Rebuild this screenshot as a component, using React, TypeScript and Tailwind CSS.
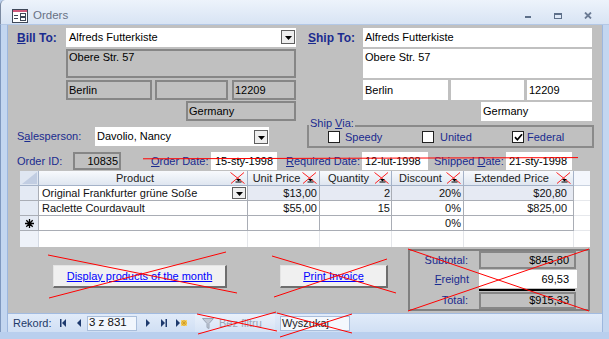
import React from "react";

const LBL = "text-[#1a2b8f]";

function U({ children }: { children: React.ReactNode }) {
  return <span className="underline underline-offset-[1px]">{children}</span>;
}

function DropBtn({ className = "" }: { className?: string }) {
  return (
    <div
      className={`absolute w-[14px] h-[14px] bg-[#eeeeee] border border-[#5e5e5e] flex items-end justify-center pb-[3px] ${className}`}
    >
      <svg width="7" height="4" viewBox="0 0 7 4">
        <path d="M0 0H7L3.5 4Z" fill="#000" />
      </svg>
    </div>
  );
}

function Check({ checked = false }: { checked?: boolean }) {
  return (
    <div className="w-[12px] h-[12px] bg-white border border-[#202020] flex items-center justify-center">
      {checked && (
        <svg width="9" height="9" viewBox="0 0 9 9">
          <path d="M1 4.2 L3.4 6.8 L8 1.2" stroke="#000" strokeWidth="1.7" fill="none" />
        </svg>
      )}
    </div>
  );
}

const gbox = "bg-[#c0c0c0] border-2 border-[#868686] flex items-center px-[1px]";
const wbox = "bg-white flex items-center pl-[2px]";

function TitleBar() {
  return (
    <div className="h-[25px] flex items-start pt-[6px] bg-linear-to-b from-[#edf3fb] to-[#d8e4f4] border-b border-[#b3c8e6] border-l border-l-[#7b8aa1] rounded-tl-[5px]">
      <div className="h-[19px] flex items-center ml-[11px]">
        <svg width="16" height="14" viewBox="0 0 16 14">
          <rect x="0.5" y="0.5" width="15" height="13" fill="#ffffff" stroke="#3e4858" />
          <rect x="1" y="1" width="14" height="2" fill="#cf5a7c" />
          <rect x="2" y="6" width="4" height="1" fill="#3e4858" />
          <rect x="2" y="9" width="4" height="1" fill="#3e4858" />
          <rect x="8.5" y="4.5" width="5" height="3" fill="none" stroke="#3e4858" />
          <rect x="8.5" y="8.5" width="5" height="3" fill="none" stroke="#3e4858" />
        </svg>
        <span className="ml-[5px] text-[11.5px] text-[#687184]">Orders</span>
      </div>
      <div className="ml-auto flex mr-[6px] h-[19px]">
        <div className="w-[30px] h-[19px] flex items-center justify-center">
          <div className="w-[6px] h-[2px] bg-[#5d6f89] mt-[3px]" />
        </div>
        <div className="w-[30px] h-[19px] flex items-center justify-center">
          <div className="w-[8px] h-[6px] border border-[#5d6f89] border-t-2" />
        </div>
        <div className="w-[30px] h-[19px] flex items-center justify-center">
          <svg width="8" height="7" viewBox="0 0 8 7">
            <path d="M1 0.5L7 6.5M7 0.5L1 6.5" stroke="#6b7b94" strokeWidth="1.8" />
          </svg>
        </div>
      </div>
    </div>
  );
}

function TopBand() {
  return (
    <div className="flex pt-[3px] h-[96px]">
      <div className={`w-[58px] pl-[9px] h-[19px] flex items-center text-[12px] font-bold ${LBL}`}>
        <span>
          <U>B</U>ill To:
        </span>
      </div>
      <div className="w-[230px] flex flex-col">
        <div className={`relative h-[19px] ${wbox} pl-[3px]`}>
          Alfreds Futterkiste
          <DropBtn className="right-[1px] top-[2px]" />
        </div>
        <div className={`mt-[2px] h-[29px] ${gbox} !items-start pt-[1px]`}>Obere Str. 57</div>
        <div className="mt-[2px] h-[20px] flex">
          <div className={`w-[86px] ${gbox}`}>Berlin</div>
          <div className={`ml-[3px] w-[73px] ${gbox}`} />
          <div className={`ml-[4px] w-[64px] ${gbox}`}>12209</div>
        </div>
        <div className={`mt-[1px] ml-[120px] w-[110px] h-[20px] ${gbox}`}>Germany</div>
      </div>
      <div className={`ml-[12px] w-[55px] h-[19px] flex items-center text-[12px] font-bold ${LBL}`}>
        <span>
          <U>S</U>hip To:
        </span>
      </div>
      <div className="w-[229px] flex flex-col">
        <div className={`h-[19px] ${wbox}`}>Alfreds Futterkiste</div>
        <div className={`mt-[2px] h-[29px] ${wbox} !items-start pt-[3px]`}>Obere Str. 57</div>
        <div className="mt-[2px] h-[20px] flex">
          <div className={`w-[85px] ${wbox}`}>Berlin</div>
          <div className={`ml-[3px] w-[73px] ${wbox}`} />
          <div className={`ml-[3px] w-[65px] ${wbox}`}>12209</div>
        </div>
        <div className={`mt-[2px] ml-[118px] w-[111px] h-[19px] ${wbox}`}>Germany</div>
      </div>
    </div>
  );
}

function Band2() {
  return (
    <div className="flex h-[29px] items-start">
      <div className={`w-[87px] pl-[9px] mt-[6px] h-[19px] flex items-center ${LBL}`}>
        <span>
          S<U>a</U>lesperson:
        </span>
      </div>
      <div className={`relative w-[174px] mt-[6px] h-[19px] ${wbox}`}>
        Davolio, Nancy
        <DropBtn className="right-[1px] top-[3px]" />
      </div>
      <div className="relative ml-[38px] mt-[4px] w-[287px] h-[23px] border-2 border-[#8a8a8a] flex items-start">
        <span className={`absolute left-0 -top-[10px] bg-[#c0c0c0] px-[1px] h-[12px] leading-[12px] ${LBL}`}>
          Ship <U>V</U>ia:
        </span>
        <div className="ml-[19px] mt-[4px] w-[94px] flex items-center">
          <Check />
          <span className={`ml-[5px] ${LBL}`}>Speedy</span>
        </div>
        <div className="mt-[4px] w-[90px] flex items-center">
          <Check />
          <span className={`ml-[6px] ${LBL}`}>United</span>
        </div>
        <div className="mt-[4px] flex items-center">
          <Check checked />
          <span className={`ml-[3px] ${LBL}`}>Federal</span>
        </div>
      </div>
    </div>
  );
}

function Band3() {
  return (
    <div className="flex h-[20px] items-start">
      <div className={`w-[65px] pl-[9px] mt-[2px] h-[18px] flex items-center ${LBL}`}>Order ID:</div>
      <div className={`w-[48px] mt-[2px] h-[18px] ${gbox} justify-end`}>10835</div>
      <div className={`w-[90px] pl-[30px] mt-[2px] h-[18px] flex items-center ${LBL}`}>
        <span>
          <U>O</U>rder Date:
        </span>
      </div>
      <div className={`w-[66px] mt-[2px] h-[18px] ${wbox} pl-[4px]`}>15-sty-1998</div>
      <div className={`w-[85px] pl-[9px] mt-[2px] h-[18px] flex items-center ${LBL}`}>
        <span>
          <U>R</U>equired Date:
        </span>
      </div>
      <div className={`w-[66px] mt-[2px] h-[18px] ${wbox} pl-[3px]`}>12-lut-1998</div>
      <div className={`w-[78px] pl-[6px] mt-[2px] h-[18px] flex items-center ${LBL}`}>
        <span>
          Shipped <U>D</U>ate:
        </span>
      </div>
      <div className={`w-[66px] mt-[2px] h-[18px] ${wbox} pl-[3px]`}>21-sty-1998</div>
    </div>
  );
}

function FilterX() {
  return (
    <svg className="absolute right-[2px] top-[1px]" width="15" height="12" viewBox="0 0 15 12">
      <path d="M0.5 0.5L14.5 11.5M14 0.5L1 11.5" stroke="#ff2020" strokeWidth="1" />
      <path d="M6 7H11L8.5 9.5Z" fill="#000" />
      <rect x="5.5" y="9.5" width="6" height="1" fill="#000" />
    </svg>
  );
}

const cols = [
  { w: "w-[209px]", name: "Product", pr: "pr-[16px]" },
  { w: "w-[72px]", name: "Unit Price", pr: "pr-[14px]" },
  { w: "w-[72px]", name: "Quantity", pr: "pr-[14px]" },
  { w: "w-[72px]", name: "Discount", pr: "pr-[14px]" },
  { w: "w-[110px]", name: "Extended Price", pr: "pr-[14px]" },
];

const grid = "border-r border-b border-[#a9adb5]";

function Datasheet() {
  const rows = [
    ["Original Frankfurter grüne Soße", "$13,00", "2", "20%", "$20,80"],
    ["Raclette Courdavault", "$55,00", "15", "0%", "$825,00"],
    ["", "", "", "0%", ""],
  ];
  const pads = ["pl-[3px]", "pr-[2px]", "pr-[1px]", "pr-[2px]", "pr-[6px]"];
  return (
    <div className="mt-[1px] ml-[12px] w-[570px] h-[76px] flex flex-col bg-white text-[#111]">
      <div className="flex h-[15px]">
        <div className="w-[19px] h-[15px] bg-[#dfe6f1] border-r border-b border-[#a4b2c8] relative">
          <svg className="absolute left-[2px] top-[1px]" width="15" height="12" viewBox="0 0 15 12">
            <path d="M15 0V12H0Z" fill="#c1cde2" />
          </svg>
        </div>
        {cols.map((c) => (
          <div
            key={c.name}
            className={`${c.w} relative h-[15px] bg-linear-to-b from-[#f8fafd] to-[#dfe6f0] border-r border-b border-[#a4b2c8] flex items-center justify-center ${c.pr} text-[#222]`}
          >
            {c.name}
            <FilterX />
          </div>
        ))}
        <div className="w-[16px] h-[15px] bg-[#f3f6fc] border-b border-[#c9d2e0]" />
      </div>
      {rows.map((r, i) => (
        <div key={i} className="flex h-[15px]">
          <div className={`w-[19px] h-[15px] bg-[#e4eaf4] ${grid} flex items-center justify-center`}>
            {i === 2 && (
              <svg width="9" height="9" viewBox="0 0 9 9">
                <path d="M4.5 0V9M0 4.5H9M1.3 1.3L7.7 7.7M7.7 1.3L1.3 7.7" stroke="#000" strokeWidth="1.3" />
              </svg>
            )}
          </div>
          {r.map((v, j) => (
            <div
              key={j}
              className={`${cols[j].w} h-[15px] ${grid} flex items-center ${j === 0 ? "justify-start" : "justify-end"} ${pads[j]} ${
                i === 0 && j > 0 ? "bg-[#e6eaf3]" : "bg-white"
              } relative`}
            >
              {v}
              {i === 0 && j === 0 && <DropBtn className="right-[1px] top-[1px] !w-[14px] !h-[12px] !pb-[2px]" />}
            </div>
          ))}
          <div className="w-[16px] h-[15px] bg-white border-b border-[#e6e8ec]" />
        </div>
      ))}
      <div className="flex h-[16px]">
        <div className="w-[19px] h-[16px] bg-[#eef2f9] border-r border-[#d4dae4]" />
        {cols.map((c) => (
          <div key={c.name} className={`${c.w} h-[16px] border-r border-[#e4e6ea]`} />
        ))}
      </div>
    </div>
  );
}

function Btn({ w, children }: { w: string; children: React.ReactNode }) {
  return (
    <div
      className={`${w} h-[23px] bg-[#f0f0f0] border-t border-l border-[#e4e4e4] border-r-2 border-b-2 border-r-[#6e6e6e] border-b-[#6e6e6e] flex items-center justify-center text-[#0000ff] underline underline-offset-[1px]`}
    >
      {children}
    </div>
  );
}

function BottomBand() {
  return (
    <div className="flex h-[66px] items-start">
      <div className="ml-[45px] mt-[18px]">
        <Btn w="w-[174px]">Display products of the month</Btn>
      </div>
      <div className="ml-[53px] mt-[18px]">
        <Btn w="w-[108px]">Print Invoice</Btn>
      </div>
      <div className="ml-[20px] mt-[2px] w-[182px] h-[62px] border-2 border-[#808080] flex flex-col">
        <div className="flex h-[18px]">
          <div className={`w-[69px] pr-[11px] flex items-center justify-end ${LBL}`}>Subtotal:</div>
          <div className={`w-[97px] ${gbox} justify-end pr-[5px]`}>$845,80</div>
        </div>
        <div className="flex h-[18px] mt-[1px]">
          <div className={`w-[69px] pr-[10px] flex items-center justify-end ${LBL}`}>
            <span>
              <U>F</U>reight
            </span>
          </div>
          <div className="w-[98px] bg-white flex items-center justify-end pr-[8px]">69,53</div>
        </div>
        <div className="ml-[69px] mt-[1px] w-[96px] h-[2px] bg-black" />
        <div className="flex h-[17px] mt-[1px]">
          <div className={`w-[69px] pr-[11px] flex items-center justify-end ${LBL}`}>Total:</div>
          <div className={`w-[97px] ${gbox} justify-end pr-[5px]`}>$915,33</div>
        </div>
      </div>
    </div>
  );
}

const navc = "#1e3a6e";

function StatusBar() {
  return (
    <div className="h-[19px] bg-linear-to-b from-[#e1ebf9] to-[#d0dff4] border-t border-[#a2bbe0] flex items-center text-[#1f3a68]">
      <div className="w-[52px] pl-[5px]">Rekord:</div>
      <svg width="6" height="8" viewBox="0 0 6 8">
        <rect x="0" y="0" width="1.5" height="8" fill={navc} />
        <path d="M6 0V8L2 4Z" fill={navc} />
      </svg>
      <svg className="ml-[11px]" width="4" height="8" viewBox="0 0 4 8">
        <path d="M4 0V8L0 4Z" fill={navc} />
      </svg>
      <div className="ml-[6px] w-[50px] h-[15px] bg-[#f1f6fd] border border-[#a9bedb] flex items-center pl-[1px] text-[#111] text-[11.5px]">
        3 z 831
      </div>
      <svg className="ml-[9px]" width="4" height="8" viewBox="0 0 4 8">
        <path d="M0 0V8L4 4Z" fill={navc} />
      </svg>
      <svg className="ml-[11px]" width="6" height="8" viewBox="0 0 6 8">
        <path d="M0 0V8L4 4Z" fill={navc} />
        <rect x="4.5" y="0" width="1.5" height="8" fill={navc} />
      </svg>
      <svg className="ml-[9px]" width="11" height="8" viewBox="0 0 11 8">
        <path d="M0 0V8L4 4Z" fill={navc} />
        <rect x="5" y="1" width="6" height="6" fill="#f4d16a" />
        <path d="M8 1V7M5 4H11M6 2L10 6M10 2L6 6" stroke="#d09a20" strokeWidth="0.8" />
      </svg>
      <div className="ml-[8px] w-[80px] h-[18px] bg-linear-to-b from-[#eaf1fb] to-[#d6e3f5] flex items-center pl-[7px] text-[#9ca6b6]">
        <svg width="12" height="11" viewBox="0 0 12 11">
          <path d="M0.5 0.5H11.5L7 5.5V10.5L5 9.5V5.5Z" fill="#c3cad6" stroke="#9aa4b4" />
        </svg>
        <span className="ml-[5px]">Bez filtru</span>
      </div>
      <div className="ml-[5px] w-[70px] h-[15px] bg-[#f4f8fd] border border-[#a9bedb] flex items-center pl-[1px] text-[#222]">
        Wyszukaj
      </div>
    </div>
  );
}

function Overlay() {
  const lines: [number, number, number, number][] = [
    [143, 158.8, 578, 157.6],
    [48, 255, 237, 293],
    [49, 298, 226, 252],
    [272, 256, 396, 293],
    [274, 297, 387, 259],
    [408, 249, 589, 311],
    [408, 311, 589, 249],
    [197, 314, 277, 331],
    [198, 334, 276, 312],
    [277, 313, 352, 333],
    [280, 337, 352, 314],
  ];
  return (
    <svg className="absolute left-0 top-0 pointer-events-none" width="609" height="339" viewBox="0 0 609 339">
      {lines.map(([x1, y1, x2, y2], i) => (
        <line key={i} x1={x1} y1={y1} x2={x2} y2={y2} stroke="#ff0000" strokeWidth="1" />
      ))}
    </svg>
  );
}

export default function App() {
  return (
    <div className="relative w-[609px] h-[339px] overflow-hidden bg-[#bcd1ee] font-['Liberation_Sans',Arial,sans-serif] text-[11px] leading-none text-black flex flex-col">
      <TitleBar />
      <div className="flex h-[307px]">
        <div className="w-[8px] h-full bg-[#c3d6f0] border-l border-[#7f98bf] border-r border-r-[#9db7de]" />
        <div className="w-[594px] h-full flex flex-col">
          <div className="h-[288px] bg-[#c0c0c0] flex flex-col">
            <TopBand />
            <Band2 />
            <Band3 />
            <Datasheet />
            <BottomBand />
          </div>
          <StatusBar />
        </div>
        <div className="w-[7px] h-full bg-[#c3d6f0] border-l border-[#9db7de]" />
      </div>
      <div className="h-[7px] bg-[#b9cfee]" />
      <Overlay />
    </div>
  );
}
